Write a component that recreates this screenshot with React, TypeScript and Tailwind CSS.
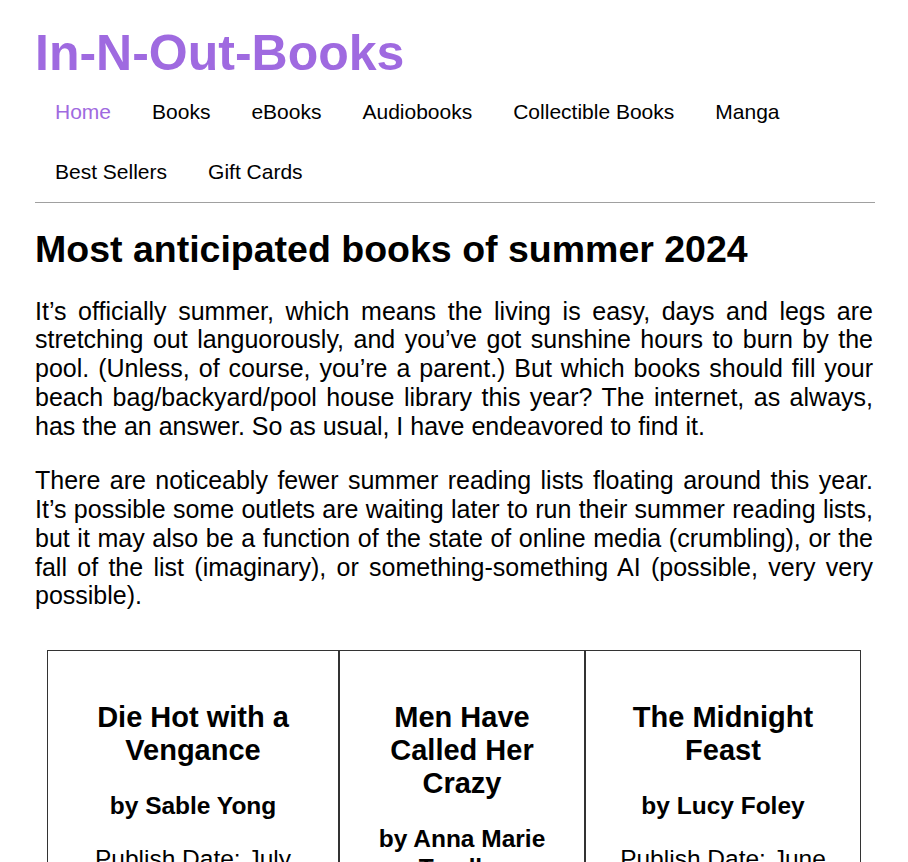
import React from 'react';

const navLinks = ['Home', 'Books', 'eBooks', 'Audiobooks', 'Collectible Books', 'Manga', 'Best Sellers', 'Gift Cards'];

const books = [
  { title: 'Die Hot with a Vengance', author: 'Sable Yong', date: 'July 2024', width: 'w-[292px]' },
  { title: 'Men Have Called Her Crazy', author: 'Anna Marie Tendler', date: 'June 2024', width: 'w-[246px]' },
  { title: 'The Midnight Feast', author: 'Lucy Foley', date: 'June 2024', width: 'w-[276px]' },
];

const App: React.FC = () => {
  return (
    <div className="min-h-screen bg-white pl-[35px] pr-[33px] pt-[25px] pb-10 font-['Liberation_Sans',Arial,sans-serif] text-black">
      <h1 className="text-[50px] leading-[57px] font-bold text-[#9f6ae0]">In-N-Out-Books</h1>

      <nav className="flex flex-wrap">
        {navLinks.map((link, i) => (
          <a
            key={link}
            href="#"
            className={`pl-[20px] pr-[21px] py-[18px] text-[21px] leading-[24px] ${i === 0 ? 'text-[#9f6ae0]' : 'text-black'}`}
          >
            {link}
          </a>
        ))}
      </nav>

      <div className="border-t border-[#a0a0a0]" />

      <h2 className="mt-[25px] text-[37.5px] leading-[43px] font-bold">Most anticipated books of summer 2024</h2>

      <p className="mt-[25.5px] mr-[2px] text-[25px] leading-[28.75px] text-justify">
        It’s officially summer, which means the living is easy, days and legs are stretching out languorously, and
        you’ve got sunshine hours to burn by the pool. (Unless, of course, you’re a parent.) But which books should
        fill your beach bag/backyard/pool house library this year? The internet, as always, has the an answer. So as
        usual, I have endeavored to find it.
      </p>
      <p className="mt-[26px] mr-[2px] text-[25px] leading-[28.75px] text-justify">
        There are noticeably fewer summer reading lists floating around this year. It’s possible some outlets are
        waiting later to run their summer reading lists, but it may also be a function of the state of online media
        (crumbling), or the fall of the list (imaginary), or something-something AI (possible, very very possible).
      </p>

      <div className="mt-[39.5px] ml-[12px] flex">
        {books.map((book) => (
          <div key={book.title} className={`${book.width} border border-[#333] px-5 pt-[50px] pb-8 text-center`}>
            <h3 className="text-[29px] leading-[33.3px] font-bold">{book.title}</h3>
            <h4 className="mt-[25px] text-[24.5px] leading-[28.2px] font-bold">by {book.author}</h4>
            <p className="mt-[25px] text-[24.5px] leading-[28.2px]">Publish Date: {book.date}</p>
          </div>
        ))}
      </div>
    </div>
  );
};

export default App;
